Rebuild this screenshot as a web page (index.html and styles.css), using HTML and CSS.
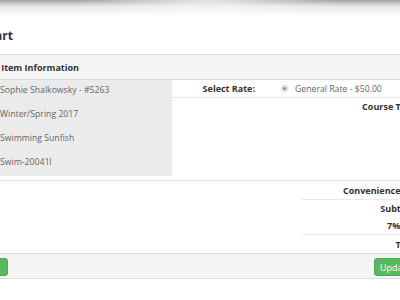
FILE: index.html
```html
<!DOCTYPE html>
<html lang="en">
<head>
    <meta charset="UTF-8">
    <meta name="viewport" content="width=device-width, initial-scale=1.0">
    <title>Shopping Cart</title>
    <link rel="stylesheet" href="styles.css">
</head>
<body>
<div class="shade"></div>
<div class="page">
    <div class="title-row">
        <h2 class="title">Shopping Cart</h2>
    </div>

    <div class="panel">
        <div class="panel-heading">
            <span class="heading-text">Registrations - Item Information</span>
        </div>

        <div class="item-row">
            <div class="item-info">
                <p>Sophie Shalkowsky - #5263</p>
                <p>Winter/Spring 2017</p>
                <p>Swimming Sunfish</p>
                <p>Swim-20041l</p>
            </div>
            <div class="item-rates">
                <div class="rate-row">
                    <span class="rate-label">Select Rate:</span>
                    <label class="rate-option"><span class="radio"></span>General Rate - $50.00</label>
                </div>
                <div class="course-row">
                    <span class="course-label">Course Total:</span>
                    <span class="amount">$50.00</span>
                </div>
            </div>
        </div>

        <div class="totals">
            <div class="total-row line">
                <span class="total-label">Convenience Fee:</span>
                <span class="amount">$0.00</span>
            </div>
            <div class="total-row">
                <span class="total-label">Subtotal:</span>
                <span class="amount">$50.00</span>
            </div>
            <div class="total-row line">
                <span class="total-label">7% Tax:</span>
                <span class="amount">$3.50</span>
            </div>
            <div class="total-row">
                <span class="total-label">Total:</span>
                <span class="amount">$53.50</span>
            </div>
        </div>

        <div class="panel-footer">
            <button class="btn btn-back">Continue Shopping</button>
            <button class="btn btn-update">Update Cart</button>
        </div>
    </div>
</div>
</body>
</html>
```

FILE: styles.css
```css
body {
    margin: 0;
    width: 400px;
    height: 300px;
    overflow: hidden;
    background: #ffffff;
    font-family: 'Open Sans', Arial, sans-serif;
    color: #555555;
}

/* shadow of the header bar above */
.shade {
    height: 16px;
    background:
        radial-gradient(ellipse 32% 100% at 52% 0, rgba(255, 255, 255, 0.7), rgba(255, 255, 255, 0) 100%),
        linear-gradient(to bottom, rgba(0, 0, 0, 0.36), rgba(0, 0, 0, 0.09) 40%, rgba(0, 0, 0, 0));
}

.page {
    margin-left: -120px;
    width: 640px;
}

.title-row {
    height: 38px;
    display: flex;
    align-items: center;
}

.title {
    width: 133px;
    margin: 0;
    text-align: right;
    font-size: 12px;
    font-weight: bold;
    color: #333333;
    white-space: nowrap;
}

.panel {
    border-top: 1px solid #dddddd;
}

.panel-heading {
    height: 24px;
    background: #f5f5f5;
    border-bottom: 1px solid #dddddd;
    display: flex;
    align-items: center;
}

.heading-text {
    width: 199px;
    text-align: right;
    font-size: 9px;
    font-weight: bold;
    color: #333333;
    white-space: nowrap;
}

.item-row {
    display: flex;
    height: 100px;
    border-bottom: 1px solid #dddddd;
}

.item-info {
    width: 232px;
    height: 96px;
    box-sizing: border-box;
    margin-left: 60px;
    padding: 3px 8px 7px 60px;
    background: #ebebeb;
    display: flex;
    flex-direction: column;
    gap: 10px;
    font-size: 8.7px;
    color: #666666;
    white-space: nowrap;
}

.item-info p {
    margin: 0;
    line-height: 14px;
}

.item-rates {
    flex: 1;
}

.rate-row {
    display: flex;
    align-items: center;
    height: 17px;
    border-bottom: 1px solid #e6e6e6;
}

.rate-label {
    width: 83px;
    text-align: right;
    font-size: 9px;
    font-weight: bold;
    color: #333333;
}

.rate-option {
    display: flex;
    align-items: center;
    margin-left: 26px;
    font-size: 8.7px;
    color: #666666;
    white-space: nowrap;
}

.radio {
    width: 5px;
    height: 5px;
    margin-right: 7px;
    border: 1px solid #c8c8c8;
    border-radius: 50%;
    background: radial-gradient(circle, #8a8a8a 0 1.3px, #f2f2f2 1.6px);
}

.course-row,
.total-row {
    display: flex;
    align-items: center;
    font-size: 9px;
    white-space: nowrap;
}

.course-row {
    height: 17px;
}

.course-label {
    width: 249px;
    text-align: right;
    font-weight: bold;
    color: #333333;
}

.amount {
    margin-left: 14px;
    color: #666666;
}

.totals {
    margin-left: 422px;
}

.total-row {
    height: 17px;
}

.total-row:first-child {
    height: 18px;
}

.total-row:last-child {
    height: 18px;
}

.total-row.line {
    border-bottom: 1px solid #e8e8e8;
}

.total-label {
    width: 119px;
    text-align: right;
    font-weight: bold;
    color: #333333;
}

.panel-footer {
    height: 26px;
    box-sizing: border-box;
    padding: 4px 0 0 40px;
    background: #f5f5f5;
    border-top: 1px solid #dddddd;
    border-bottom: 1px solid #dddddd;
    display: flex;
    justify-content: space-between;
    align-items: flex-start;
    width: 560px;
}

.btn {
    height: 18px;
    padding: 0 8px;
    border: 1px solid #4cae4c;
    border-radius: 3px;
    background: #5cb85c;
    color: #ffffff;
    font-family: 'Open Sans', Arial, sans-serif;
    font-size: 9px;
    cursor: pointer;
}

.btn-back {
    width: 88px;
}

.btn-update {
    width: 66px;
    padding-left: 5px;
    text-align: left;
}
```
